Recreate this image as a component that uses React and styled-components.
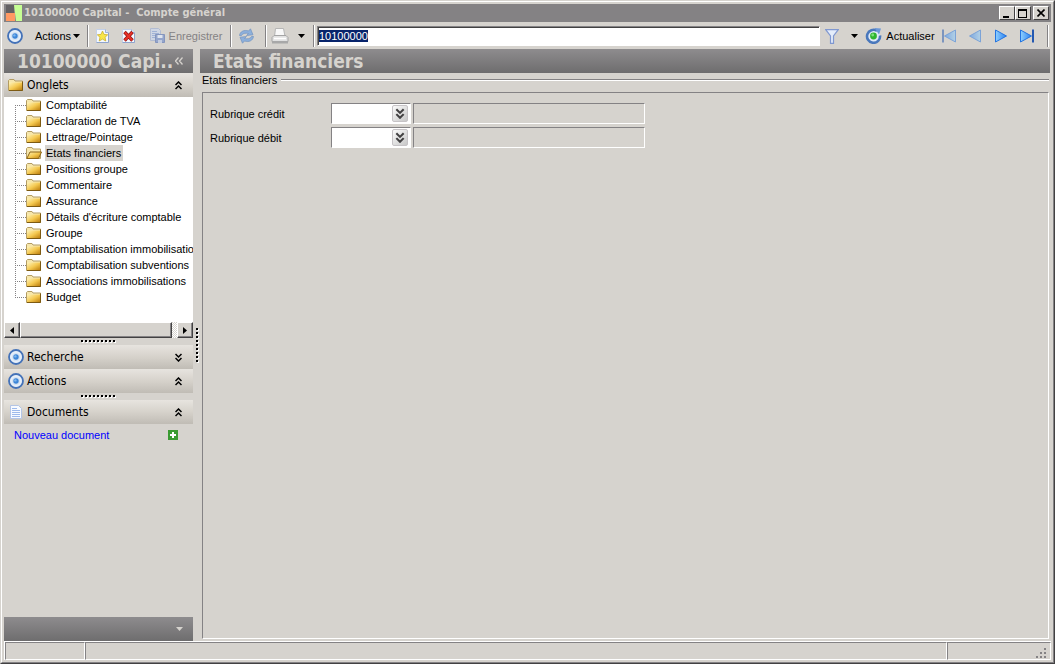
import React, { useState } from "react";
import styled, { createGlobalStyle, css } from "styled-components";

const face = "#d6d3ce";
const shadow = "#848284";
const bar = "linear-gradient(#8e8c8e, #6e6d6e)";
const ui = '"Liberation Sans", Arial, sans-serif';
const heading = '"DejaVu Sans Condensed", "DejaVu Sans", sans-serif';

const Global = createGlobalStyle`
  *, *::before, *::after { box-sizing: border-box; }
  body { margin: 0; background: ${face}; font: 11px/16px ${ui}; color: #000; }
  button, input { font: inherit; color: inherit; }
  svg { display: block; flex: none; }
`;

const Window = styled.div`
  min-height: 100vh;
  display: flex;
  flex-direction: column;
  background: ${face};
  border: 1px solid ${face};
  border-right-color: #424142;
  border-bottom-color: #424142;
`;

const WindowInner = styled.div`
  flex: 1;
  display: flex;
  flex-direction: column;
  border: 1px solid #fff;
  border-right-color: ${shadow};
  border-bottom-color: ${shadow};
  padding: 2px;
`;

const TitleBar = styled.header`
  display: flex;
  align-items: center;
  gap: 2px;
  height: 18px;
  padding: 0 2px 0 2px;
  background: ${shadow};
  color: ${face};
`;

const WindowTitle = styled.h1`
  flex: 1;
  margin: 0;
  font: bold 11px/18px ${heading};
  white-space: pre;
`;

const CaptionButtons = styled.div`
  display: flex;
`;

const CaptionButton = styled.button`
  width: 16px;
  height: 14px;
  padding: 0;
  margin-left: ${(p) => (p.$apart ? "2px" : "0")};
  display: flex;
  align-items: center;
  justify-content: center;
  background: ${face};
  border: 1px solid #fff;
  border-right-color: #424142;
  border-bottom-color: #424142;
  color: #000;
`;

const Toolbar = styled.div`
  display: flex;
  align-items: center;
  height: 27px;
`;

const ToolButton = styled.button`
  display: flex;
  align-items: center;
  justify-content: ${(p) => (p.$end ? "flex-end" : "center")};
  gap: ${(p) => (p.$end ? "2px" : "4px")};
  width: ${(p) => p.$w}px;
  height: 24px;
  padding: 0;
  flex: none;
  border: 0;
  background: none;
  white-space: nowrap;
  &:disabled { color: ${shadow}; }
`;

const Separator = styled.span`
  flex: none;
  width: 2px;
  height: 22px;
  margin: 0 2px 0 ${(p) => (p.$last ? "7px" : "2px")};
  border-left: 1px solid ${shadow};
  border-right: 1px solid #fff;
`;

const RecordInput = styled.input`
  flex: 1;
  min-width: 60px;
  height: 20px;
  padding: 0 1px;
  border: 1px solid ${shadow};
  border-right-color: #fff;
  border-bottom-color: #fff;
  border-radius: 0;
  box-shadow: inset 1px 1px 0 #424142;
  background: #fff;
  outline: 0;
  &::selection { background: #08246b; color: #fff; }
`;

const Body = styled.div`
  flex: 1;
  display: flex;
  padding-right: 1px;
`;

const Sidebar = styled.aside`
  width: 190px;
  padding-right: 1px;
  flex: none;
  display: flex;
  flex-direction: column;
`;

const BarTitle = styled.h2`
  display: flex;
  align-items: center;
  height: 24px;
  margin: 0;
  padding: 0 10px 0 13px;
  background: ${bar};
  color: ${face};
  font: bold 19px/24px ${heading};
  white-space: pre;
`;

const CollapseButton = styled.button`
  margin-left: auto;
  padding: 0;
  border: 0;
  background: none;
  line-height: 0;
  color: ${face};
`;

const SectionHeader = styled.button`
  display: flex;
  align-items: center;
  gap: 3px;
  width: 100%;
  height: 24px;
  padding: 0 11px 0 4px;
  border: 0;
  background: linear-gradient(#e7e4df, #d6d2cb 50%, #c0bcb5);
  font: 12px/24px ${heading};
  text-align: left;
`;

const SectionName = styled.span`
  flex: 1;
`;

const TreePane = styled.div`
  height: 225px;
  overflow: hidden;
  background: #fff;
`;

const Tree = styled.ul`
  list-style: none;
  margin: 0;
  padding: 0 0 0 11px;
`;

const dotsDown = "repeating-linear-gradient(#848284 0 1px, transparent 1px 2px)";
const dotsAcross = "repeating-linear-gradient(90deg, #848284 0 1px, transparent 1px 2px)";

const TreeItem = styled.li`
  display: flex;
  align-items: center;
  height: 16px;
  padding-left: 11px;
  background: ${dotsDown} 0 0 / 1px 16px no-repeat, ${dotsAcross} 0 8px / 11px 1px no-repeat;
  &:first-child {
    background: ${dotsDown} 0 8px / 1px 8px no-repeat, ${dotsAcross} 0 8px / 11px 1px no-repeat;
  }
  &:last-child {
    background: ${dotsDown} 0 0 / 1px 8px no-repeat, ${dotsAcross} 0 8px / 11px 1px no-repeat;
  }
`;

const TreeLink = styled.a`
  margin-left: 3px;
  padding: 0 2px 0 1px;
  color: #000;
  text-decoration: none;
  white-space: nowrap;
  ${(p) => p.$current && css`background: ${face};`}
`;

const ScrollBar = styled.div`
  display: flex;
  height: 16px;
  background: repeating-conic-gradient(#fff 0 25%, ${face} 0 50%) 0 0 / 2px 2px;
`;

const raised = css`
  background: ${face};
  border: 1px solid #fff;
  border-right-color: #424142;
  border-bottom-color: #424142;
  box-shadow: inset -1px -1px 0 ${shadow};
`;

const ScrollArrow = styled.button`
  ${raised}
  width: 16px;
  padding: 0;
  display: flex;
  align-items: center;
  justify-content: center;
`;

const ScrollThumb = styled.div`
  ${raised}
  flex: 1;
  margin-right: 5px;
`;

const Grip = styled.div`
  height: 7px;
  display: flex;
  align-items: center;
  justify-content: center;
`;

const VerticalGrip = styled.div`
  width: 6px;
  flex: none;
  padding: 279px 0 0 2px;
`;

const NewDocument = styled.div`
  display: flex;
  align-items: center;
  justify-content: space-between;
  height: 22px;
  padding: 0 15px 0 10px;
`;

const DocumentLink = styled.a`
  color: #00f;
  text-decoration: none;
`;

const IconButton = styled.button`
  padding: 0;
  border: 0;
  background: none;
`;

const SidebarFooter = styled.div`
  display: flex;
  align-items: center;
  justify-content: flex-end;
  height: 24px;
  margin-top: auto;
  padding-right: 10px;
  background: ${bar};
`;

const Main = styled.main`
  flex: 1;
  min-width: 0;
  display: flex;
  flex-direction: column;
`;

const GroupTitle = styled.h3`
  display: flex;
  align-items: center;
  gap: 4px;
  height: 14px;
  margin: 0;
  padding: 0 1px 0 2px;
  font-size: 11px;
  line-height: 14px;
  font-weight: normal;
  &::after {
    content: "";
    flex: 1;
    height: 2px;
    border-top: 1px solid ${shadow};
    border-bottom: 1px solid #fff;
  }
`;

const Panel = styled.div`
  flex: 1;
  display: flex;
  flex-direction: column;
  gap: 3px;
  margin: 5px 1px 2px 2px;
  padding: 10px 7px;
  border: 1px solid ${shadow};
  border-right-color: #fff;
  border-bottom-color: #fff;
`;

const FieldRow = styled.div`
  display: flex;
  align-items: center;
  height: 21px;
`;

const FieldLabel = styled.label`
  width: 121px;
  flex: none;
`;

const sunken = css`
  border: 1px solid ${shadow};
  border-right-color: #fff;
  border-bottom-color: #fff;
`;

const Lookup = styled.div`
  ${sunken}
  display: flex;
  align-items: center;
  width: 80px;
  height: 21px;
  margin-right: 2px;
  padding-right: 2px;
  background: #fff;
`;

const LookupInput = styled.input`
  flex: 1;
  min-width: 0;
  padding: 0 2px;
  border: 0;
  outline: 0;
  background: none;
`;

const LookupButton = styled.button`
  width: 16px;
  height: 17px;
  padding: 0;
  display: flex;
  align-items: center;
  justify-content: center;
  border: 1px solid #c6c3c6;
  border-radius: 2px;
  background: linear-gradient(135deg, #fbfbfb, #c8c8c8);
`;

const ReadOnlyInput = styled.input`
  ${sunken}
  width: 232px;
  height: 21px;
  padding: 0 2px;
  border-radius: 0;
  background: ${face};
  outline: 0;
`;

const StatusBar = styled.footer`
  display: flex;
  height: 19px;
  border-top: 1px solid #fff;
  border-left: 1px solid #fff;
`;

const StatusCell = styled.div`
  ${sunken}
  ${(p) => (p.$w ? css`width: ${p.$w}px;` : css`flex: 1;`)}
  display: flex;
  align-items: flex-end;
  justify-content: flex-end;
  padding: 0 3px 0 0;
`;

function Target() {
  return (
    <svg width="16" height="16" viewBox="0 0 16 16">
      <circle cx="8" cy="8" r="7" fill="#d4e2f2" stroke="#4472b8" strokeWidth="1.800" />
      <circle cx="8" cy="8" r="4.900" fill="none" stroke="#e6effa" strokeWidth="1.600" />
      <circle cx="8" cy="8" r="2.700" fill="#3d86d8" />
      <circle cx="7.400" cy="7.400" r="1.200" fill="#7db6ee" />
    </svg>
  );
}

function Caret({ fill = "#000" }) {
  return (
    <svg width="7" height="4" viewBox="0 0 7 4">
      <path d="M0 0h7L3.500 4z" fill={fill} />
    </svg>
  );
}

function DoubleChevron({ up, color = "#000", w = 7, h = 9, sw = 1.5 }) {
  return (
    <svg width={w} height={h} viewBox="0 0 7 9" fill="none" stroke={color} strokeWidth={sw}>
      <path d={up ? "M.5 4 3.500 1l3 3M.5 8l3-3 3 3" : "M.5 1l3 3 3-3M.5 5l3 3 3-3"} />
    </svg>
  );
}

function Folder({ open }) {
  return (
    <svg width="16" height="14" viewBox="0 0 16 14">
      <defs>
        <linearGradient id="folder" x1="0" y1="0" x2="1" y2="1">
          <stop offset="0" stopColor="#fff3b8" />
          <stop offset=".5" stopColor="#f4c850" />
          <stop offset="1" stopColor="#b87808" />
        </linearGradient>
      </defs>
      <path d="M.5 12.500V2.500l1-1H6l1 1.500h7.500v9.500z" fill="#f6e6ac" stroke="#b39c62" />
      {open ? (
        <path d="M.8 12.500 4 6h11.500l-3 6.500z" fill="url(#folder)" stroke="#8c6518" />
      ) : (
        <>
          <path d="M1 4.500h13.500v8H1z" fill="url(#folder)" />
          <path d="M1 12.500h13.500v-9" fill="none" stroke="#7d5a12" />
        </>
      )}
    </svg>
  );
}

function Page({ children }) {
  return (
    <svg width="16" height="16" viewBox="0 0 16 16">
      <path d="M1.500 1.500h9l3 3v10h-12z" fill="#f4f8fe" stroke="#c3d0e8" />
      <path d="M13.500 4.500v10h-12" fill="none" stroke="#8fa4cc" />
      <path d="M10.500 1.500v3h3" fill="#dbe6f6" stroke="#9fb2d6" />
      {children}
    </svg>
  );
}

function DocumentIcon() {
  return (
    <svg width="16" height="16" viewBox="0 0 16 16">
      <path d="M2.500 1.500h8l3 3v10h-11z" fill="#f7faff" stroke="#b3c5e6" />
      <path d="M4 4.500h5M4 6.500h8M4 8.500h8M4 10.500h8M4 12.500h8" stroke="#9dbaec" />
    </svg>
  );
}

function StarPage() {
  return (
    <Page>
      <path d="M7.500 3l1.500 3.400 3.700.4-2.700 2.500.8 3.700-3.300-1.900L4.200 13l.8-3.700-2.700-2.500 3.700-.4z" fill="#f8e648" stroke="#cdb02c" strokeWidth=".8" />
    </Page>
  );
}

function DeletePage() {
  return (
    <Page>
      <path d="M3.500 4l8 8.500M11.500 4l-8 8.500" stroke="#8c1414" strokeWidth="3.400" />
      <path d="M3.800 4.300l7.400 7.900M11.200 4.300l-7.400 7.900" stroke="#e83028" strokeWidth="2" />
    </Page>
  );
}

function SaveIcon() {
  return (
    <svg width="16" height="16" viewBox="0 0 16 16">
      <path d="M1.500.5h8l2 2v10h-10z" fill="#cfd6e4" stroke="#b2bcd2" />
      <path d="M3 3.500h5M3 5.500h7M3 7.500h4M3 9.500h3" stroke="#a0b2d6" />
      <path d="M6.500 6.500h9v8h-9z" fill="#94a5cc" stroke="#8495bd" />
      <path d="M8.500 7h5v3h-5z" fill="#dfe4ee" />
      <path d="M9 12h4v3H9z" fill="#c4cde0" />
    </svg>
  );
}

function SyncIcon() {
  return (
    <svg width="17" height="16" viewBox="0 0 17 16" fill="#8db0dc" stroke="#7394bf" strokeWidth=".7">
      <path d="M1.500 7.500C2 3.500 6 1.500 10.500 3L12.500.8l2.500 6-6.500.7 2-2C7.500 4.800 4.500 5.200 3.500 7.500z" />
      <path d="M15.500 8.500c-.5 4-4.500 6-9 4.500l-2 2.200-2.500-6 6.500-.7-2 2c3 .7 6 .3 7-2z" />
    </svg>
  );
}

function PrinterIcon() {
  return (
    <svg width="18" height="16" viewBox="0 0 18 16">
      <path d="M4.500.5h8l1.500 8H3.500z" fill="#f8f8f8" stroke="#b5b5b5" />
      <path d="M1 9.500l2-2h12l2 2v4H1z" fill="#e2e2e2" stroke="#a4a4a4" />
      <path d="M1 13h16v2.500H1z" fill="#a8a8a8" />
      <path d="M3 10.500h12" stroke="#fff" strokeWidth="1.500" />
    </svg>
  );
}

function Funnel() {
  return (
    <svg width="14" height="16" viewBox="0 0 14 16">
      <path d="M.7 1.700h12.600L8.500 8v7.300h-3V8z" fill="#e4edfb" stroke="#8098d0" strokeWidth="1.200" />
    </svg>
  );
}

function RefreshIcon() {
  return (
    <svg width="17" height="17" viewBox="0 0 17 17">
      <circle cx="8.500" cy="9" r="6.400" fill="#dfeaf8" />
      <path d="M12 3.800A6.500 6.500 0 1 0 15 8.500" fill="none" stroke="#4a78bc" strokeWidth="2.600" />
      <path d="M9.500 1l6.500.5-2 6z" fill="#6b98d8" />
      <circle cx="8.500" cy="9" r="3.400" fill="#2fb52f" />
      <circle cx="7.700" cy="8" r="1.400" fill="#7be07b" />
    </svg>
  );
}

function NavIcon({ back, edge, faded }) {
  return (
    <svg width="16" height="14" viewBox="0 0 16 14" opacity={faded ? 0.5 : 1}>
      <defs>
        <linearGradient id="nav" x1="0" y1="0" x2="1" y2="0">
          <stop offset="0" stopColor="#8fd0ff" />
          <stop offset="1" stopColor="#2a80f0" />
        </linearGradient>
      </defs>
      <g transform={back ? "translate(16 0) scale(-1 1)" : undefined}>
        <path
          d={edge ? "M1.500 1 12.500 7 1.500 13z" : "M2.500 1 13.500 7 2.500 13z"}
          fill="url(#nav)"
          stroke="#2474e0"
          strokeLinejoin="round"
        />
        {edge && <path d="M14 0.500v13" stroke="#2458b0" strokeWidth="2" />}
      </g>
    </svg>
  );
}

function GripDots({ vertical, count }) {
  const cells = Array.from({ length: count }, (_, i) => i * 4);
  const length = count * 4;
  return (
    <svg width={vertical ? 3 : length} height={vertical ? length : 3}>
      {cells.map((c) => (
        <g key={c}>
          <rect x={vertical ? 1 : c + 1} y={vertical ? c + 1 : 1} width="2" height="2" fill="#fff" />
          <rect x={vertical ? 0 : c} y={vertical ? c : 0} width="2" height="2" fill="#000" />
        </g>
      ))}
    </svg>
  );
}

const tabs = [
  "Comptabilité",
  "Déclaration de TVA",
  "Lettrage/Pointage",
  "Etats financiers",
  "Positions groupe",
  "Commentaire",
  "Assurance",
  "Détails d'écriture comptable",
  "Groupe",
  "Comptabilisation immobilisations",
  "Comptabilisation subventions",
  "Associations immobilisations",
  "Budget",
];

const selectAll = (node) => {
  if (node) {
    node.focus();
    node.select();
  }
};

function Field({ id, label }) {
  return (
    <FieldRow>
      <FieldLabel htmlFor={id}>{label}</FieldLabel>
      <Lookup>
        <LookupInput id={id} />
        <LookupButton aria-label={label}>
          <DoubleChevron color="#424142" w={10} h={11} sw={1.7} />
        </LookupButton>
      </Lookup>
      <ReadOnlyInput readOnly aria-label={label} />
    </FieldRow>
  );
}

export default function App() {
  const [current, setCurrent] = useState("Etats financiers");
  return (
    <Window>
      <Global />
      <WindowInner>
        <TitleBar>
          <svg width="16" height="16" viewBox="0 0 16 16">
            <path d="M0 0h8v8H0z" fill="#636163" />
            <path d="M0 8h9v8H0z" fill="#ff9a63" />
            <path d="M8 0h8v16H10z" fill="#c6ff94" />
          </svg>
          <WindowTitle>{"10100000 Capital -  Compte général"}</WindowTitle>
          <CaptionButtons>
            <CaptionButton aria-label="Réduire">
              <svg width="10" height="9"><path d="M1 7h6v2H1z" /></svg>
            </CaptionButton>
            <CaptionButton aria-label="Agrandir">
              <svg width="10" height="9"><path d="M0 0h9v9H0zM1 2v6h7V2z" fillRule="evenodd" /></svg>
            </CaptionButton>
            <CaptionButton $apart aria-label="Fermer">
              <svg width="8" height="8"><path d="M.5.5l7 7M7.500.5l-7 7" stroke="#000" strokeWidth="1.600" /></svg>
            </CaptionButton>
          </CaptionButtons>
        </TitleBar>

        <Toolbar>
          <ToolButton $w={22} aria-label="Menu"><Target /></ToolButton>
          <ToolButton $w={54} $end>Actions<Caret /></ToolButton>
          <Separator $last />
          <ToolButton $w={24} aria-label="Nouveau"><StarPage /></ToolButton>
          <ToolButton $w={28} aria-label="Supprimer"><DeletePage /></ToolButton>
          <ToolButton $w={85} disabled><SaveIcon />Enregistrer</ToolButton>
          <Separator />
          <ToolButton $w={24} aria-label="Synchroniser"><SyncIcon /></ToolButton>
          <Separator $last />
          <ToolButton $w={22} aria-label="Imprimer"><PrinterIcon /></ToolButton>
          <ToolButton $w={20} aria-label="Options d'impression"><Caret /></ToolButton>
          <Separator />
          <RecordInput ref={selectAll} aria-label="Compte" defaultValue="10100000" />
          <ToolButton $w={24} aria-label="Filtrer"><Funnel /></ToolButton>
          <ToolButton $w={20} aria-label="Options de filtre"><Caret /></ToolButton>
          <ToolButton $w={72}><RefreshIcon />Actualiser</ToolButton>
          <ToolButton $w={26} aria-label="Premier"><NavIcon back edge faded /></ToolButton>
          <ToolButton $w={26} aria-label="Précédent"><NavIcon back faded /></ToolButton>
          <ToolButton $w={26} aria-label="Suivant"><NavIcon /></ToolButton>
          <ToolButton $w={26} aria-label="Dernier"><NavIcon edge /></ToolButton>
          <Separator $last />
        </Toolbar>

        <Body>
          <Sidebar>
            <BarTitle>
              10100000 Capi..
              <CollapseButton aria-label="Replier">
                <svg width="8" height="8" viewBox="0 0 8 8" fill="none" stroke="currentColor" strokeWidth="1.300">
                  <path d="M3.500.5.500 4l3 3.500M7.500.5l-3 3.500 3 3.500" />
                </svg>
              </CollapseButton>
            </BarTitle>
            <SectionHeader><Folder /><SectionName>Onglets</SectionName><DoubleChevron up /></SectionHeader>
            <TreePane>
              <Tree>
                {tabs.map((name) => (
                  <TreeItem key={name}>
                    <Folder open={name === current} />
                    <TreeLink href="#" $current={name === current} onClick={() => setCurrent(name)}>
                      {name}
                    </TreeLink>
                  </TreeItem>
                ))}
              </Tree>
            </TreePane>
            <ScrollBar>
              <ScrollArrow aria-label="Défiler à gauche"><svg width="4" height="7"><path d="M4 0v7L0 3.500z" /></svg></ScrollArrow>
              <ScrollThumb />
              <ScrollArrow aria-label="Défiler à droite"><svg width="4" height="7"><path d="M0 0v7l4-3.500z" /></svg></ScrollArrow>
            </ScrollBar>
            <Grip><GripDots count={9} /></Grip>
            <SectionHeader><Target /><SectionName>Recherche</SectionName><DoubleChevron /></SectionHeader>
            <SectionHeader><Target /><SectionName>Actions</SectionName><DoubleChevron up /></SectionHeader>
            <Grip><GripDots count={9} /></Grip>
            <SectionHeader><DocumentIcon /><SectionName>Documents</SectionName><DoubleChevron up /></SectionHeader>
            <NewDocument>
              <DocumentLink href="#">Nouveau document</DocumentLink>
              <IconButton aria-label="Ajouter un document">
                <svg width="10" height="10" viewBox="0 0 10 10">
                  <path d="M0 0h10v10H0z" fill="#399a31" />
                  <path d="M4 2h2v2h2v2H6v2H4V6H2V4h2z" fill="#fff" />
                </svg>
              </IconButton>
            </NewDocument>
            <SidebarFooter><Caret fill={face} /></SidebarFooter>
          </Sidebar>
          <VerticalGrip><GripDots vertical count={9} /></VerticalGrip>
          <Main>
            <BarTitle>Etats financiers</BarTitle>
            <GroupTitle>Etats financiers</GroupTitle>
            <Panel>
              <Field id="credit" label="Rubrique crédit" />
              <Field id="debit" label="Rubrique débit" />
            </Panel>
          </Main>
        </Body>

        <StatusBar>
          <StatusCell $w={80} />
          <StatusCell />
          <StatusCell $w={104}>
            <svg width="11" height="11" fill={shadow}>
              <path d="M8 0h2v2H8zM8 4h2v2H8zM8 8h2v2H8zM4 4h2v2H4zM4 8h2v2H4zM0 8h2v2H0z" />
            </svg>
          </StatusCell>
        </StatusBar>
      </WindowInner>
    </Window>
  );
}
